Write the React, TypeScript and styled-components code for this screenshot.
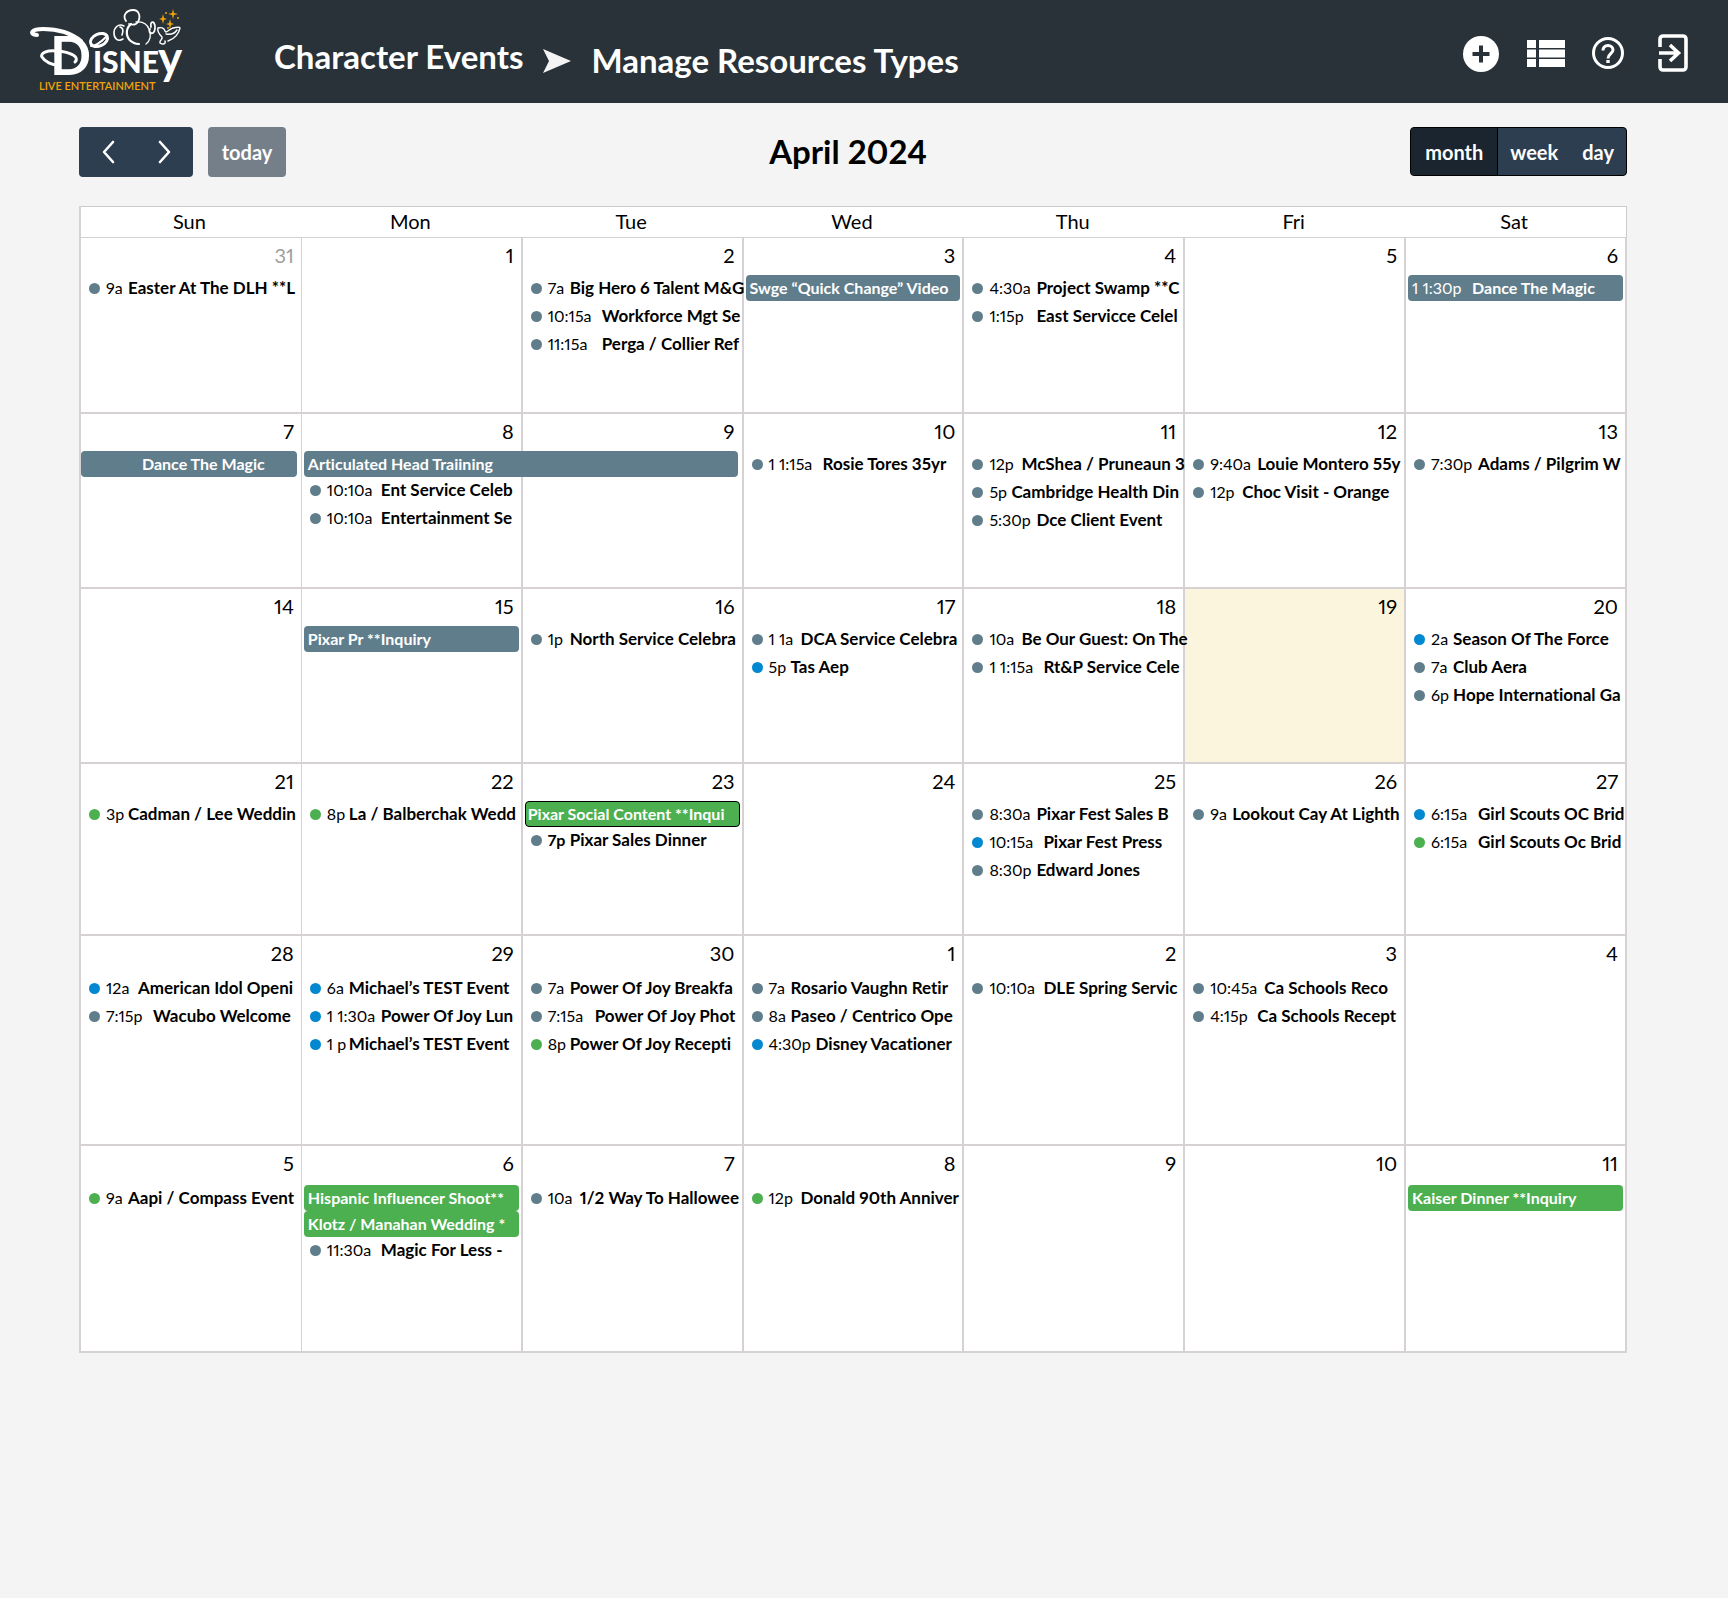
import React from "react";
import styled, { createGlobalStyle, css } from "styled-components";

const GlobalStyle = createGlobalStyle`
  *, *::before, *::after { box-sizing: border-box; }
  body {
    margin: 0;
    background: #f4f4f4;
    color: #000;
    font-family: Lato, "Open Sans", sans-serif;
    font-variant-numeric: proportional-nums;
    font-variant-ligatures: none;
  }
  button { font: inherit; border: 0; padding: 0; cursor: pointer; }
`;

/* ---------- top bar ---------- */

const TopBar = styled.header`
  display: flex;
  align-items: center;
  min-height: 103px;
  padding: 0 35px 0 24px;
  background: #283238;
  color: #fff;
`;

const LogoLink = styled.a`
  display: block;
  width: 250px;
  height: 103px;
  flex: none;
`;

const Breadcrumb = styled.nav`
  display: flex;
  align-items: flex-start;
  gap: 20px;
  flex: 1;
  padding-top: 12px;
  font-size: 33px;
  line-height: 36px;
  font-weight: 700;
  white-space: nowrap;
`;

const CrumbLink = styled.a`
  color: inherit;
  text-decoration: none;
`;

const CrumbArrow = styled.svg`
  width: 28px;
  height: 24px;
  margin-top: 11px;
`;

const CrumbCurrent = styled.h1`
  margin: 4px 0 0;
  font: inherit;
`;

const Actions = styled.div`
  display: flex;
  gap: 24px;
  padding-top: 5px;
`;

const IconButton = styled.button`
  display: flex;
  width: 40px;
  height: 40px;
  background: none;
  color: #fff;
`;

/* ---------- toolbar ---------- */

const Main = styled.main`
  padding: 24px 101px 48px 79px;
`;

const Toolbar = styled.div`
  display: flex;
  align-items: flex-start;
  justify-content: space-between;
  margin-bottom: 29px;
`;

const ToolGroup = styled.div`
  display: flex;
  gap: 15px;
`;

const ButtonGroup = styled.div<{ $outlined?: boolean }>`
  display: flex;
  height: ${(p) => (p.$outlined ? 49 : 50)}px;
  border-radius: 4px;
  overflow: hidden;
  background: #2c3e50;
  ${(p) => p.$outlined && css`border: 1px solid #000;`}
`;

const ArrowButton = styled.button`
  display: flex;
  align-items: center;
  justify-content: center;
  width: 57px;
  background: none;
  color: #fff;
`;

const TodayButton = styled.button`
  width: 78px;
  height: 50px;
  border-radius: 4px;
  background: #757f8a;
  color: #fff;
  font-size: 20px;
  font-weight: 700;
`;

const ViewButton = styled.button<{ $active?: boolean }>`
  padding: 0 14px;
  background: none;
  color: #fff;
  font-size: 20px;
  font-weight: 700;
  & + & { padding: 0 12px; }
  ${(p) =>
    p.$active &&
    css`
      background: #1a252f;
      border-right: 1px solid #000;
    `}
`;

const MonthTitle = styled.h2`
  margin: 0;
  font-size: 33px;
  line-height: 48px;
  font-weight: 700;
`;

/* ---------- calendar ---------- */

const Calendar = styled.table`
  width: 100%;
  table-layout: fixed;
  border-collapse: separate;
  border-spacing: 0;
  background: #fff;
  border-left: 2px solid #d6d2d3;
`;

const WeekdayCell = styled.th`
  height: 32px;
  padding: 0 4px 2px 0;
  border-top: 1px solid #cbcbcb;
  border-bottom: 1px solid #d2d2d2;
  font-size: 20px;
  line-height: 28px;
  font-weight: 400;
  &:last-child { border-right: 1px solid #cbcbcb; }
`;

const WeekRow = styled.tr<{ $height: number }>`
  height: ${(p) => p.$height}px;
`;

const DayCell = styled.td<{ $today?: boolean }>`
  padding: 0;
  vertical-align: top;
  border-right: 2px solid #d6d2d3;
  border-bottom: 2px solid #d6d2d3;
  background: ${(p) => (p.$today ? "#fcf5dd" : "#fff")};
  &:first-child { border-right-width: 1px; }
`;

const DayNumber = styled.div<{ $muted?: boolean; $roomy?: boolean }>`
  padding: 4px 7px ${(p) => (p.$roomy ? 9 : 7)}px 0;
  font-size: 20px;
  line-height: 26px;
  text-align: right;
  color: ${(p) => (p.$muted ? "#a0a0a0" : "#000")};
`;

const EventList = styled.ul`
  margin: 0;
  padding: 0;
  list-style: none;
  font-size: 17px;
  line-height: 26px;
  white-space: nowrap;
`;

const EventItem = styled.li`
  display: flex;
  align-items: center;
  width: 0;
  margin: 0 0 2px 8px;
`;

const dotColors = { slate: "#607d8b", blue: "#0288d1", green: "#4caf50" };
type Tone = keyof typeof dotColors;

const Dot = styled.span<{ $tone: Tone }>`
  flex: none;
  width: 11px;
  height: 11px;
  margin-right: 6px;
  border-radius: 50%;
  background: ${(p) => dotColors[p.$tone]};
`;

const EventTime = styled.span<{ $width: number; $bold?: boolean }>`
  flex: none;
  width: ${(p) => p.$width}px;
  font-size: 16px;
  font-weight: ${(p) => (p.$bold ? 700 : 400)};
`;

const EventTitle = styled.span`
  font-weight: 700;
`;

const EventBar = styled.li<{ $tone: Tone; $span: number; $outlined?: boolean; $continued?: boolean }>`
  position: relative;
  display: flex;
  width: calc(${(p) => p.$span * 100}% - 4px);
  height: 26px;
  margin-left: ${(p) => (p.$continued ? 0 : 2)}px;
  padding-left: ${(p) => (p.$continued ? 61 : 4)}px;
  border-radius: 4px;
  background: ${(p) => dotColors[p.$tone]};
  color: #fff;
  font-size: 16px;
  font-weight: 700;
  ${(p) =>
    p.$outlined &&
    css`
      border: 1px solid #000;
      padding-left: 2px;
      line-height: 23px;
    `}
`;

/* ---------- data ---------- */

type CalEvent = {
  time?: string;
  title: string;
  tone?: Tone;
  bar?: boolean;
  span?: number;
  outlined?: boolean;
  continued?: boolean;
  boldTime?: boolean;
};
type Day = { day: number; muted?: boolean; today?: boolean; events?: CalEvent[] };
type Week = { height: number; days: Day[] };

const ev = (time: string, title: string, tone: Tone = "slate"): CalEvent => ({ time, title, tone });

const weeks: Week[] = [
  {
    height: 176,
    days: [
      { day: 31, muted: true, events: [ev("9a", "Easter At The DLH **L")] },
      { day: 1 },
      { day: 2, events: [ev("7a", "Big Hero 6 Talent M&G"), ev("10:15a", "Workforce Mgt Se"), ev("11:15a", "Perga / Collier Ref")] },
      { day: 3, events: [{ title: "Swge “Quick Change” Video", bar: true }] },
      { day: 4, events: [ev("4:30a", "Project Swamp **C"), ev("1:15p", "East Servicce Celel")] },
      { day: 5 },
      { day: 6, events: [{ time: "1 1:30p", title: "Dance The Magic", bar: true }] },
    ],
  },
  {
    height: 175,
    days: [
      { day: 7, events: [{ title: "Dance The Magic", bar: true, continued: true }] },
      {
        day: 8,
        events: [
          { title: "Articulated Head Traiining", bar: true, span: 2 },
          ev("10:10a", "Ent Service Celeb"),
          ev("10:10a", "Entertainment Se"),
        ],
      },
      { day: 9 },
      { day: 10, events: [ev("1 1:15a", "Rosie Tores 35yr")] },
      { day: 11, events: [ev("12p", "McShea / Pruneaun 3"), ev("5p", "Cambridge Health Din"), ev("5:30p", "Dce Client Event")] },
      { day: 12, events: [ev("9:40a", "Louie Montero 55y"), ev("12p", "Choc Visit - Orange")] },
      { day: 13, events: [ev("7:30p", "Adams / Pilgrim W")] },
    ],
  },
  {
    height: 175,
    days: [
      { day: 14 },
      { day: 15, events: [{ title: "Pixar Pr **Inquiry", bar: true }] },
      { day: 16, events: [ev("1p", "North Service Celebra")] },
      { day: 17, events: [ev("1 1a", "DCA Service Celebra"), ev("5p", "Tas Aep", "blue")] },
      { day: 18, events: [ev("10a", "Be Our Guest: On The"), ev("1 1:15a", "Rt&P Service Cele")] },
      { day: 19, today: true },
      { day: 20, events: [ev("2a", "Season Of The Force", "blue"), ev("7a", "Club Aera"), ev("6p", "Hope International Ga")] },
    ],
  },
  {
    height: 172,
    days: [
      { day: 21, events: [ev("3p", "Cadman / Lee Weddin", "green")] },
      { day: 22, events: [ev("8p", "La / Balberchak Wedd", "green")] },
      {
        day: 23,
        events: [
          { title: "Pixar Social Content **Inqui", tone: "green", bar: true, outlined: true },
          { time: "7p", title: "Pixar Sales Dinner", boldTime: true },
        ],
      },
      { day: 24 },
      { day: 25, events: [ev("8:30a", "Pixar Fest Sales B"), ev("10:15a", "Pixar Fest Press", "blue"), ev("8:30p", "Edward Jones")] },
      { day: 26, events: [ev("9a", "Lookout Cay At Lighth")] },
      { day: 27, events: [ev("6:15a", "Girl Scouts OC Brid", "blue"), ev("6:15a", "Girl Scouts Oc Brid", "green")] },
    ],
  },
  {
    height: 210,
    days: [
      { day: 28, events: [ev("12a", "American Idol Openi", "blue"), ev("7:15p", "Wacubo Welcome")] },
      {
        day: 29,
        events: [
          ev("6a", "Michael’s TEST Event", "blue"),
          ev("1 1:30a", "Power Of Joy Lun", "blue"),
          ev("1 p", "Michael’s TEST Event", "blue"),
        ],
      },
      { day: 30, events: [ev("7a", "Power Of Joy Breakfa"), ev("7:15a", "Power Of Joy Phot"), ev("8p", "Power Of Joy Recepti", "green")] },
      { day: 1, events: [ev("7a", "Rosario Vaughn Retir"), ev("8a", "Paseo / Centrico Ope"), ev("4:30p", "Disney Vacationer", "blue")] },
      { day: 2, events: [ev("10:10a", "DLE Spring Servic")] },
      { day: 3, events: [ev("10:45a", "Ca Schools Reco"), ev("4:15p", "Ca Schools Recept")] },
      { day: 4 },
    ],
  },
  {
    height: 207,
    days: [
      { day: 5, events: [ev("9a", "Aapi / Compass Event", "green")] },
      {
        day: 6,
        events: [
          { title: "Hispanic Influencer Shoot**", tone: "green", bar: true },
          { title: "Klotz / Manahan Wedding *", tone: "green", bar: true },
          ev("11:30a", "Magic For Less -"),
        ],
      },
      { day: 7, events: [ev("10a", "1/2 Way To Hallowee")] },
      { day: 8, events: [ev("12p", "Donald 90th Anniver", "green")] },
      { day: 9 },
      { day: 10 },
      { day: 11, events: [{ title: "Kaiser Dinner **Inquiry", tone: "green", bar: true }] },
    ],
  },
];

const weekdays = ["Sun", "Mon", "Tue", "Wed", "Thu", "Fri", "Sat"];

/* Title columns line up between times of the same length. */
const timeWidth = (time: string) => {
  const n = time.replace(" ", "").length;
  if (n <= 2) return 22;
  if (n === 3) return 32;
  if (n === 5) return 47;
  return 54;
};

/* ---------- pieces ---------- */

const Logo = () => (
  <svg width="180" height="103" viewBox="24 0 180 103" role="img" aria-label="Disney Live Entertainment">
    <g fill="none" stroke="#fff" strokeLinecap="round">
      <path d="M37 35c-9-1-5-6 6-6 14 0 28 4 38 12" strokeWidth="4" />
      <path d="M75 62c5-5-4-10-18-11-10-1-17 2-15 6 3 5 10 8 16 8" strokeWidth="3" />
      <ellipse cx="99" cy="40" rx="9" ry="6" strokeWidth="3" transform="rotate(-24 99 40)" />
      <path d="M91 46c6 0 11-5 15-9" strokeWidth="2" />
      <path d="M126 21c-4-6 1-11 7-11s8 6 5 12c-2 3-6 3-9 2" strokeWidth="1.8" />
      <path d="M124 26c-6-3-10 2-10 7 0 6 4 9 9 6M120 27c4 1 3 5 2 8" strokeWidth="1.6" />
      <path d="M131 24c-6 5-6 15 3 19 2 1 4 1 5 1" strokeWidth="2.2" />
      <path d="M136 22c7-1 11 2 13 7 3 6 1 12-3 15" strokeWidth="1.3" />
      <path d="M151 27c-1-4 1-6 3-4 2 3 1 9-1 10-3 1-5-2-3-4" strokeWidth="1.8" />
      <path d="M158 28c3-1 6 0 7 3s4-2 8-3c4-1 7-1 7 0-1 5-5 11-12 13M158 28c-1 3 1 6 4 9 1 3-3 3-2 6 3 2 6 1 5-2M166 34c5 1 9-1 11-4" strokeWidth="1.4" />
    </g>
    <g fill="#efa30b">
      <path d="M163 14l1 4 3 1-3 1-1 4-1-4-3-1 3-1zM173 9l1 4 4 1-4 1-1 4-1-4-4-1 4-1zM170 19l1 4 3 1-3 1-1 4-1-4-3-1 3-1z" />
      <circle cx="166" cy="13" r="1" /><circle cx="178" cy="18" r="1" /><circle cx="168" cy="28" r="1" />
    </g>
    <text x="50" y="75" fill="#fff" fontFamily="Lato, sans-serif" fontWeight="700" fontSize="54">
      D
      <tspan x="93" y="73" fontSize="30" fontWeight="900">ISNE</tspan>
      <tspan x="158" y="74" fontSize="46" fontWeight="700">y</tspan>
    </text>
    <text x="39" y="90" fill="#efa30b" fontFamily="Lato, sans-serif" fontWeight="600" fontSize="11">
      LIVE ENTERTAINMENT
    </text>
  </svg>
);

const EventRow = ({ event }: { event: CalEvent }) => {
  const { time, title, tone = "slate", bar, span = 1, outlined, continued, boldTime } = event;
  if (bar) {
    return (
      <EventBar $tone={tone} $span={span} $outlined={outlined} $continued={continued}>
        {time && <EventTime $width={60}>{time}</EventTime>}
        {title}
      </EventBar>
    );
  }
  return (
    <EventItem>
      <Dot $tone={tone} />
      <EventTime $width={timeWidth(time ?? "")} $bold={boldTime}>{time}</EventTime>
      <EventTitle>{title}</EventTitle>
    </EventItem>
  );
};

const Chevron = ({ d }: { d: string }) => (
  <svg width="14" height="24" viewBox="0 0 14 24" fill="none" stroke="currentColor" strokeWidth="2.6" strokeLinecap="round" strokeLinejoin="round">
    <path d={d} />
  </svg>
);

export default function App() {
  return (
    <>
      <GlobalStyle />
      <TopBar>
        <LogoLink href="#" aria-label="Home"><Logo /></LogoLink>
        <Breadcrumb aria-label="Breadcrumb">
          <CrumbLink href="#">Character Events</CrumbLink>
          <CrumbArrow viewBox="0 0 28 24" fill="#f4f4f4" aria-hidden="true">
            <path d="M0 0l28 12L0 24l6-12z" />
          </CrumbArrow>
          <CrumbCurrent>Manage Resources Types</CrumbCurrent>
        </Breadcrumb>
        <Actions>
          <IconButton type="button" aria-label="Add">
            <svg width="40" height="40" viewBox="0 0 40 40">
              <circle cx="20" cy="20" r="18" fill="#fff" />
              <path d="M20 11.500v17M11.500 20h17" stroke="#283238" strokeWidth="4" />
            </svg>
          </IconButton>
          <IconButton type="button" aria-label="List">
            <svg width="40" height="40" viewBox="0 0 40 40" fill="#fff">
              <path d="M2 6h9v8H2zM14 6h26v8H14zM2 15.500h9v8H2zM14 15.500h26v8H14zM2 25h9v8H2zM14 25h26v8H14z" />
            </svg>
          </IconButton>
          <IconButton type="button" aria-label="Help">
            <svg width="40" height="40" viewBox="0 0 40 40" fill="none" stroke="#fff" strokeWidth="3">
              <circle cx="19" cy="19" r="14.500" />
              <path d="M14 16.500c0-3 2-5 5-5s5 2 5 4.500c0 3.500-5 4-5 8.500" />
              <path d="M19 26v3" strokeWidth="3.400" />
            </svg>
          </IconButton>
          <IconButton type="button" aria-label="Log out">
            <svg width="40" height="40" viewBox="0 0 40 40" fill="none" stroke="#fff" strokeWidth="3.600">
              <path d="M7 13V5a3 3 0 0 1 3-3h20a3 3 0 0 1 3 3v28a3 3 0 0 1-3 3H10a3 3 0 0 1-3-3v-8" />
              <path d="M6 19h20M17 11l8.500 8-8.500 8" />
            </svg>
          </IconButton>
        </Actions>
      </TopBar>

      <Main>
        <Toolbar>
          <ToolGroup>
            <ButtonGroup>
              <ArrowButton type="button" aria-label="Previous month"><Chevron d="M12 2L3 12l9 10" /></ArrowButton>
              <ArrowButton type="button" aria-label="Next month"><Chevron d="M2 2l9 10-9 10" /></ArrowButton>
            </ButtonGroup>
            <TodayButton type="button">today</TodayButton>
          </ToolGroup>
          <MonthTitle>April 2024</MonthTitle>
          <ButtonGroup $outlined>
            <ViewButton type="button" $active>month</ViewButton>
            <ViewButton type="button">week</ViewButton>
            <ViewButton type="button">day</ViewButton>
          </ButtonGroup>
        </Toolbar>

        <Calendar>
          <thead>
            <tr>
              {weekdays.map((name) => (
                <WeekdayCell key={name} scope="col">{name}</WeekdayCell>
              ))}
            </tr>
          </thead>
          <tbody>
            {weeks.map((week, w) => (
              <WeekRow key={w} $height={week.height}>
                {week.days.map((d) => (
                  <DayCell key={d.day} $today={d.today}>
                    <DayNumber $muted={d.muted} $roomy={week.height > 200}>{d.day}</DayNumber>
                    {d.events && (
                      <EventList>
                        {d.events.map((event, i) => (
                          <EventRow key={i} event={event} />
                        ))}
                      </EventList>
                    )}
                  </DayCell>
                ))}
              </WeekRow>
            ))}
          </tbody>
        </Calendar>
      </Main>
    </>
  );
}
